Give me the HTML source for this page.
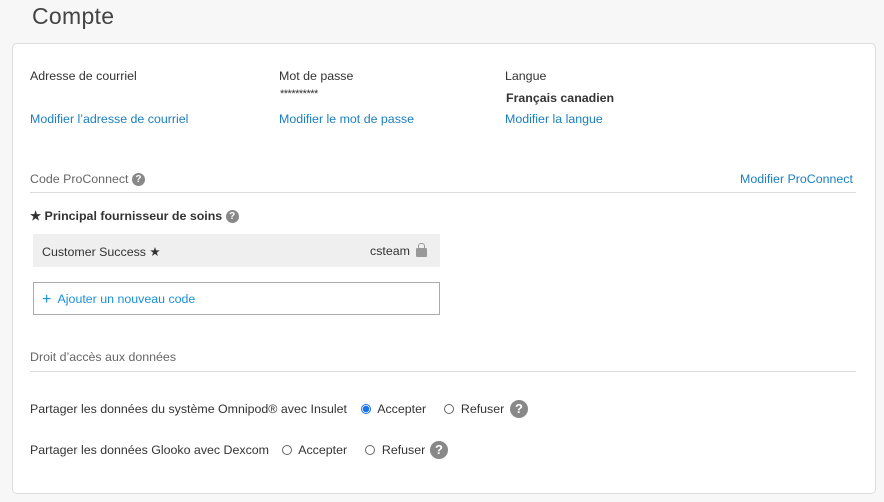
<!DOCTYPE html><html><head><style>
body{margin:0;width:884px;height:502px;background:#f7f7f7;font-family:"Liberation Sans",sans-serif;position:relative;overflow:hidden;color:#333}
.a{position:absolute;white-space:nowrap;font-size:12.4px}
.l{color:#1a7fc1}
.g{color:#666}
.card{position:absolute;left:12px;top:43px;width:862px;height:449px;background:#fff;border:1px solid #ddd;border-radius:5px}
.q{display:inline-block;width:13px;height:13px;border-radius:50%;background:#888;color:#fff;font-size:10px;font-weight:bold;text-align:center;line-height:13px;vertical-align:1px}
.qb{width:18px;height:18px;line-height:18px;font-size:13px}
.r{display:inline-block;width:10px;height:10px;border:1px solid #666;border-radius:50%;vertical-align:-1px;box-sizing:border-box;background:#fff}
.rs{border:1px solid #1a73e8;background:radial-gradient(circle,#1a73e8 0 3px,#fff 3.5px)}
.hr{position:absolute;left:30px;width:826px;height:1px;background:#ddd}
</style></head><body>
<div class="a" style="left:32px;top:3px;font-size:23px;color:#444;letter-spacing:0.3px">Compte</div>
<div class="card"></div>
<div class="a" style="left:30px;top:69px">Adresse de courriel</div>
<div class="a" style="left:279px;top:69px">Mot de passe</div>
<div class="a" style="left:280px;top:88px;font-size:11px;letter-spacing:-0.5px">**********</div>
<div class="a" style="left:505px;top:69px">Langue</div>
<div class="a" style="left:506px;top:91px;font-weight:bold">Français canadien</div>
<div class="a l" style="left:30px;top:112px">Modifier l’adresse de courriel</div>
<div class="a l" style="left:279px;top:112px">Modifier le mot de passe</div>
<div class="a l" style="left:505px;top:112px">Modifier la langue</div>
<div class="a g" style="left:30px;top:172px">Code ProConnect <span class="q">?</span></div>
<div class="a l" style="left:740px;top:172px">Modifier ProConnect</div>
<div class="hr" style="top:192px"></div>
<div class="a" style="left:30px;top:208px;font-weight:bold">★ Principal fournisseur de soins <span class="q">?</span></div>
<div style="position:absolute;left:33px;top:234px;width:407px;height:33px;background:#efefef"></div>
<div class="a" style="left:42px;top:244px">Customer Success ★</div>
<div class="a" style="left:370px;top:244px">csteam</div>
<div style="position:absolute;left:416px;top:248px;width:11px;height:9px;background:#999;border-radius:1px"></div>
<div style="position:absolute;left:418px;top:243px;width:5px;height:6px;border:1px solid #999;border-radius:3px 3px 0 0;border-bottom:none"></div>
<div style="position:absolute;left:33px;top:282px;width:405px;height:31px;border:1px solid #aaa"></div>
<div class="a l" style="left:42px;top:291px;color:#1a90d8"><span style="font-size:16px;vertical-align:-1px">+</span>&nbsp; Ajouter un nouveau code</div>
<div class="a g" style="left:30px;top:350px">Droit d’accès aux données</div>
<div class="hr" style="top:371px"></div>
<div class="a" style="left:30px;top:402px">Partager les données du système Omnipod® avec Insulet</div>
<div class="a" style="left:361px;top:402px"><span class="r rs"></span>&nbsp; Accepter</div>
<div class="a" style="left:444px;top:402px"><span class="r"></span>&nbsp; Refuser</div>
<div class="a" style="left:510px;top:400px"><span class="q qb">?</span></div>
<div class="a" style="left:30px;top:443px">Partager les données Glooko avec Dexcom</div>
<div class="a" style="left:282px;top:443px"><span class="r"></span>&nbsp; Accepter</div>
<div class="a" style="left:365px;top:443px"><span class="r"></span>&nbsp; Refuser</div>
<div class="a" style="left:430px;top:441px"><span class="q qb">?</span></div>
</body></html>
